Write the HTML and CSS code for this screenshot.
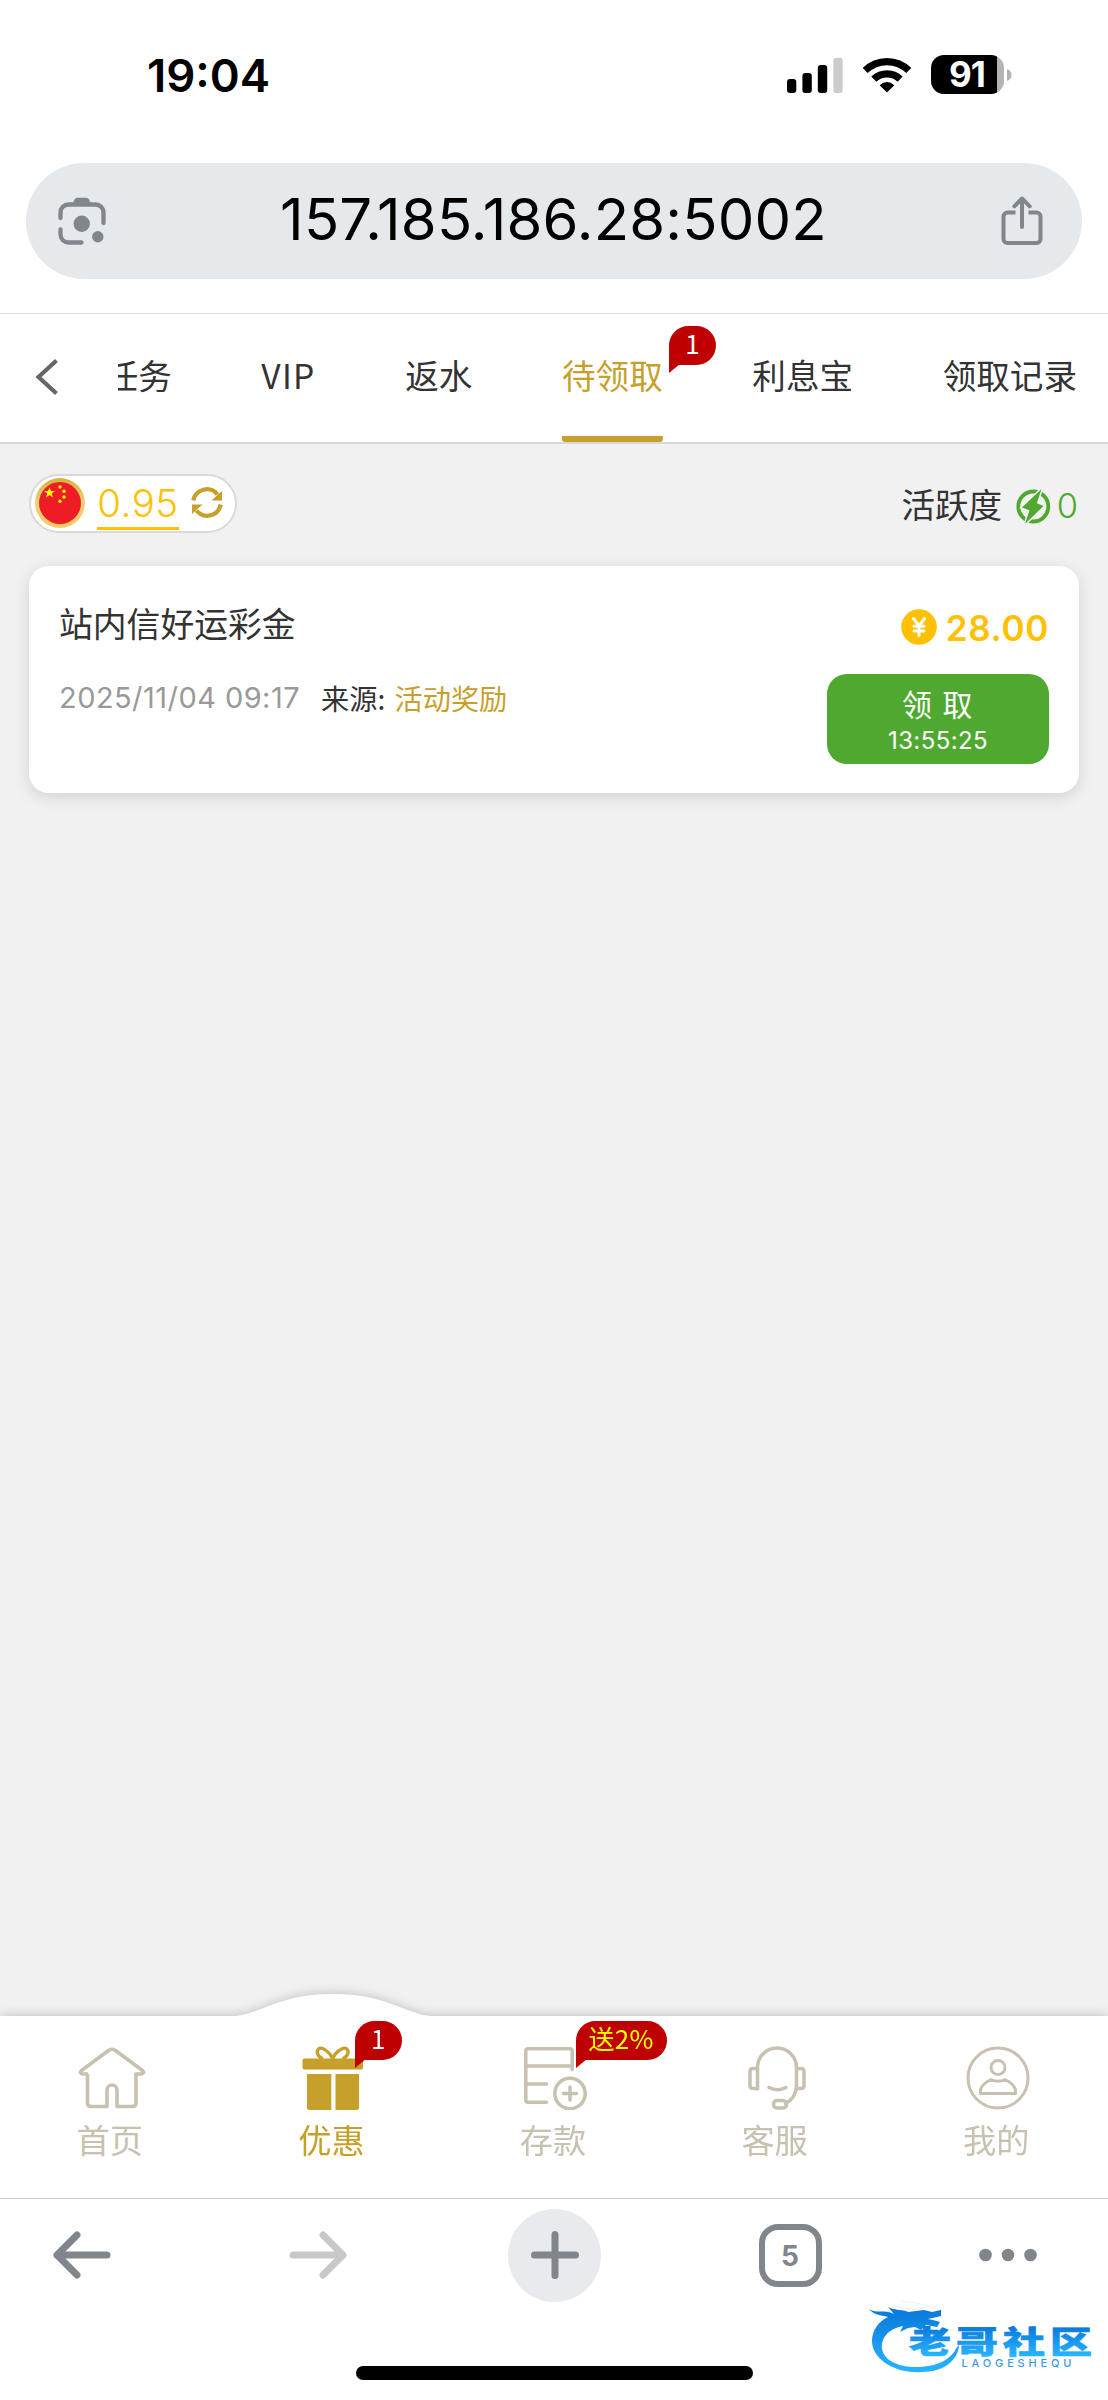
FILE: index.html
```html
<!DOCTYPE html>
<html lang="zh-CN">
<head>
<meta charset="utf-8">
<title>待领取</title>
<link rel="stylesheet" href="styles.css">
</head>
<body>
<div class="screen">
  <header class="status">
    <span class="clock">19:04</span>
    <div class="status-icons">
      <svg width="56" height="36" viewBox="0 0 56 36"><rect x="0" y="22" width="9.3" height="14" rx="3"/><rect x="15.4" y="16" width="9.4" height="20" rx="3"/><rect x="30.8" y="8" width="9.4" height="28" rx="3"/><rect x="46.3" y="0.7" width="9.4" height="35.3" rx="3" fill="#ccc"/></svg>
      <svg class="wifi" width="50" height="36" viewBox="0 0 50 36"><path d="M3.2 13.5a31 31 0 0 1 43.6 0M11.8 22.2a19 19 0 0 1 26.4 0" fill="none" stroke="#000" stroke-width="7.2"/><path d="M17.6 28.2Q25 21.800 32.400 28.200L25 35.600Z"/></svg>
      <div class="battery"><span>91</span></div>
      <svg class="nub" width="5" height="12" viewBox="0 0 5 12"><path d="M0 0Q4.500 1.500 4.500 6T0 12Z" fill="#b3b3b3"/></svg>
    </div>
  </header>

  <div class="address">
    <svg width="48" height="48" viewBox="0 0 48 48" fill="none" stroke="#80868b" stroke-width="4.300" stroke-linecap="round"><path d="M2.500 21v-5.500a8 8 0 0 1 8-8h27a8 8 0 0 1 8 8v10.500M2.500 32.500v5a8 8 0 0 0 8 8h13"/><path d="M14 8 16.500 2.500Q17.500 .8 19 .8H28.500Q30.200 .8 31 2.500L33.500 8Z" fill="#80868b" stroke="none"/><circle cx="23.700" cy="26.700" r="8.200" fill="#80868b" stroke="none"/><circle cx="39.800" cy="39.800" r="5.700" fill="#80868b" stroke="none"/></svg>
    <span class="url">157.185.186.28:5002</span>
    <svg width="42" height="50" viewBox="0 0 42 50" fill="none" stroke="#80868b" stroke-width="4" stroke-linecap="round" stroke-linejoin="round"><path d="M14.500 16.500H6.500a4 4 0 0 0-4 4V43a4 4 0 0 0 4 4h29a4 4 0 0 0 4-4V20.500a4 4 0 0 0-4-4h-8" stroke-linecap="butt"/><path d="M21 31V3M13.300 10.300 21 2.500l7.700 7.800"/></svg>
  </div>

  <nav class="tabs">
    <svg class="back" width="24" height="38" viewBox="0 0 24 38"><path d="M21.500 2.500 3.500 19l18 16.500" fill="none" stroke="#666" stroke-width="4.200"/></svg>
    <div class="tab-track">
      <span class="tab">任务</span>
      <span class="tab vip">VIP</span>
      <span class="tab">返水</span>
      <span class="tab active">待领取</span>
      <span class="tab">利息宝</span>
      <span class="tab">领取记录</span>
    </div>
    <span class="badge tab-badge">1</span>
  </nav>

  <main class="content">
    <div class="summary">
      <div class="balance">
        <svg width="50" height="50" viewBox="0 0 50 50"><defs><linearGradient id="ring" x1="0" y1="0" x2="0" y2="1"><stop offset="0" stop-color="#d9b23d"/><stop offset=".5" stop-color="#ecd079"/><stop offset="1" stop-color="#fdc863"/></linearGradient></defs><circle cx="25" cy="25" r="25" fill="url(#ring)"/><circle cx="25" cy="25" r="21" fill="#ee1c25"/><g fill="#ff0"><path d="M14.500 9.200 15.900 13H20l-3.300 2.500L18 19.500l-3.500-2.400L11 19.500l1.300-4L9 13H13.100Z"/><circle cx="25" cy="9" r="1.700"/><circle cx="29" cy="13.200" r="1.700"/><circle cx="29" cy="19" r="1.700"/><circle cx="25" cy="23.200" r="1.700"/></g></svg>
        <span class="balance-value">0.95</span>
        <svg width="32" height="33" viewBox="0 0 32 33"><g fill="none" stroke="#c7a02b" stroke-width="4.200"><path d="M2.300 14.500A13.700 13.700 0 0 1 26.500 8.500M29.700 18.500A13.700 13.700 0 0 1 5.500 24.500"/></g><path d="M31 5v9.500H20.500ZM1 28v-9.500h10.500Z" fill="#c7a02b"/></svg>
      </div>
      <div class="activity">
        <span>活跃度</span>
        <svg width="35" height="35" viewBox="0 0 35 35"><circle cx="17.300" cy="17.500" r="15" fill="none" stroke="#4fa830" stroke-width="3.800"/><path d="M25.500 0 6 18.500 13.500 21.300 9 35 27.500 17 20.800 14.300Z" fill="#4fa830" stroke="#f1f1f1" stroke-width="3" paint-order="stroke"/></svg>
        <span class="activity-value">0</span>
      </div>
    </div>

    <article class="card">
      <div class="card-info">
        <h2>站内信好运彩金</h2>
        <p><span class="date">2025/11/04 09:17</span><span class="source">来源: </span><span class="reward">活动奖励</span></p>
      </div>
      <div class="card-action">
        <div class="amount">
          <svg width="36" height="36" viewBox="0 0 36 36"><circle cx="18" cy="18" r="17.800" fill="#ffc000"/><path d="M12.500 9.500 18 16.800l5.500-7.300M18 16.500V26.500M13 17.300h10M13 22h10" fill="none" stroke="#fff" stroke-width="3" stroke-linecap="round"/></svg>
          <span>28.00</span>
        </div>
        <button class="claim"><span class="claim-label">领取</span><span class="claim-time">13:55:25</span></button>
      </div>
    </article>
  </main>

  <nav class="bottom">
    <svg class="arch" width="220" height="26" viewBox="0 0 220 26"><path d="M13 23C40 20 56 1 110 1s70 19 97 22v3H13Z" fill="#fff"/></svg>
    <div class="item">
      <svg width="68" height="64" viewBox="0 0 68 64" fill="none" stroke="#c8c1b0" stroke-width="3.600" stroke-linejoin="round"><path d="M10 28H4.500Q1 27.500 3.500 24.500L30.500 4.500Q34 2 37.500 4.500L64.500 24.500Q67 27.500 63.500 28H58V57Q58 60.500 54.500 60.500H39V44a5 5 0 0 0-10 0V60.500H13Q9.500 60.500 9.500 57V28"/></svg>
      <span>首页</span>
    </div>
    <div class="item on">
      <svg width="62" height="64" viewBox="0 0 62 64"><rect x=".5" y="12.500" width="60.500" height="11" rx="2"/><path d="M5 28H29.300V64H7.500Q5 64 5 61.500ZM33.500 28H57V61.500Q57 64 54.500 64H33.500Z"/><path d="M30.500 12.500C27.500 5.500 20 .8 16.800 2.700c-3.300 3-1 8.500 4.200 9.800M30.500 12.500C33.500 5.500 41.300 .8 44.500 2.700c3.300 3 1 8.500-4.200 9.800" fill="none" stroke="#c7a02b" stroke-width="3.300"/></svg>
      <span>优惠</span>
      <b class="badge">1</b>
    </div>
    <div class="item">
      <svg width="64" height="64" viewBox="0 0 64 64" fill="none" stroke="#c8c1b0" stroke-width="3.500" stroke-linecap="round" stroke-linejoin="round"><path d="M49.200 23.500V5Q49.200 2.800 47 2.800H5Q2.800 2.800 2.800 5V54Q2.800 56.200 5 56.200H23.500M3 20H49M3 38H23.500"/><circle cx="47" cy="47.500" r="15.200"/><path d="M40.500 47.500h13M47 41v13"/></svg>
      <span>存款</span>
      <b class="badge gift">送2%</b>
    </div>
    <div class="item">
      <svg width="60" height="64" viewBox="0 0 60 64" fill="none" stroke="#c8c1b0" stroke-width="3.500" stroke-linecap="round"><path d="M10.500 43V21.500a19.500 19.500 0 0 1 39 0V40Q49 52 38.500 57.500" /><path d="M10.500 22.500H6Q3 22.500 3 25.500V39.500Q3 42.500 6 42.500H10.500M49.500 22.500H54Q57 22.500 57 25.500V39.500Q57 42.500 54 42.500H49.500M22 41.500q8.500 4.500 17 0"/><rect x="26.500" y="54.500" width="13" height="7.500" rx="3.500"/></svg>
      <span>客服</span>
    </div>
    <div class="item">
      <svg width="64" height="64" viewBox="0 0 64 64" fill="none" stroke="#c8c1b0" stroke-width="3"><circle cx="32" cy="32" r="30"/><circle cx="32" cy="21.500" r="7"/><path d="M14.500 47.500V43.500Q16 38 25 33.500 32 37 39 33.500 48 38 49.500 43.500V47.500Z" stroke-linejoin="round"/></svg>
      <span>我的</span>
    </div>
  </nav>

  <footer class="toolbar">
    <div class="tools">
      <svg width="58" height="48" viewBox="0 0 58 48" fill="none" stroke="#80868b" stroke-width="7" stroke-linecap="round" stroke-linejoin="round"><path d="M54 24H4M24 4 4 24l20 20"/></svg>
      <svg class="forward" width="58" height="48" viewBox="0 0 58 48" fill="none" stroke="#c8c8c8" stroke-width="7" stroke-linecap="round" stroke-linejoin="round"><path d="M4 24h50M34 4l20 20-20 20"/></svg>
      <span class="new-tab"><svg width="48" height="48" viewBox="0 0 48 48" stroke="#80868b" stroke-width="7" stroke-linecap="round"><path d="M24 3.500v41M3.500 24h41"/></svg></span>
      <span class="tab-count">5</span>
      <svg width="58" height="14" viewBox="0 0 58 14" fill="#80868b"><circle cx="6.500" cy="7" r="6.300"/><circle cx="29" cy="7" r="6.300"/><circle cx="51.500" cy="7" r="6.300"/></svg>
    </div>
    <div class="home-bar"></div>
  </footer>

  <svg class="watermark" width="248" height="90" viewBox="0 0 248 90">
    <defs>
      <linearGradient id="blue" x1="0" y1="15" x2="0" y2="76" gradientUnits="userSpaceOnUse"><stop offset="0" stop-color="#0879dc"/><stop offset="1" stop-color="#28b3ff"/></linearGradient>
      <linearGradient id="word" x1="0" y1="44" x2="0" y2="84" gradientUnits="userSpaceOnUse"><stop offset="0" stop-color="#0879dc"/><stop offset="1" stop-color="#28b3ff"/></linearGradient>
    </defs>
    <path fill="url(#blue)" d="M9 14C17 19 24 14 34 19L28 12C35 16 43 14 48 17L64 15 72 17 81 15 81 21 68 24C73 25 77 26 80 27L77 32 66 30 61 35 55 32 48 33 40 37 43 31C27 34 21 44 22 54 24 66 40 73 60 72 78 71 92 64 97 52L99 50C98 66 83 77 62 77 35 79 12 64 12 46 12 35 19 26 28 22 20 20 14 20 9 14Z"/>
    <path d="M32 10Q53 18 70 11M42 6Q66 9 76 14" fill="none" stroke="#e4f2fd" stroke-width="1"/>
    <g transform="scale(1 .72)"><text class="mark" x="49" y="80" textLength="183" fill="url(#word)" stroke="url(#word)" stroke-width="1">老哥社区</text></g>
    <text class="latin" x="101.500" y="72" textLength="110" fill="#3a9be8">LAOGESHEQU</text>
  </svg>
</div>
</body>
</html>
```
FILE: styles.css
```css
* { box-sizing: border-box; }
body { margin: 0; background: #fff; font-family: "Noto Sans CJK SC", sans-serif; color: #333; }
svg { display: block; flex: none; }
.screen { position: relative; width: 1108px; height: 2400px; display: flex; flex-direction: column; overflow: hidden; }

.status { height: 163px; padding: 55px 96px 0 147px; display: flex; justify-content: space-between; align-items: flex-start; color: #000; font-family: Inter, sans-serif; }
.clock { font-size: 45.5px; font-weight: 600; line-height: 41px; }
.status-icons { display: flex; align-items: center; height: 39px; }
.wifi { margin: 0 19px; }
.battery { width: 73px; height: 39px; border-radius: 13px; background: linear-gradient(to right, #000 66px, #b3b3b3 66px); padding-right: 1px; color: #fff; font-size: 35px; font-weight: 700; line-height: 39px; text-align: center; letter-spacing: -1px; }
.nub { margin-left: 3px; }

.address { height: 116px; margin: 0 26px; padding: 0 39px 0 32px; border-radius: 58px; background: #e5e9ec; display: flex; align-items: center; justify-content: space-between; color: #000; font-family: Inter, sans-serif; }
.url { font-size: 58px; line-height: 70px; letter-spacing: 0.2px; padding-bottom: 5px; }

.tabs { position: relative; height: 131px; margin-top: 34px; border-top: 1px solid #dcdcdc; border-bottom: 2px solid #d8d8d8; display: flex; padding: 0 31px 0 35px; }
.back { margin-top: 44px; }
.tab-track { flex: 1; margin-left: 59px; display: flex; justify-content: flex-end; gap: 89.6px; overflow: hidden; }
.tab { flex: none; font-size: 33.6px; line-height: 122px; height: 128px; white-space: nowrap; }
.vip { letter-spacing: 1.3px; }
.tab.active { color: #c7a02b; background: linear-gradient(#c7a02b, #c7a02b) bottom / 100% 6px no-repeat; border-radius: 3px; }
.badge { position: absolute; height: 39px; min-width: 47px; border-radius: 20px 20px 20px 0; background: #bf0000; color: #fff; font-size: 26px; font-weight: 400; line-height: 33px; text-align: center; }
.badge::after { content: ""; position: absolute; left: 0; top: 38px; border-top: 9px solid #bf0000; border-right: 11px solid transparent; }
.tab-badge { left: 669px; top: 12px; }

.content { height: 1572px; background: #f1f1f1; padding: 30px 29px 0; }
.summary { height: 59px; display: flex; justify-content: space-between; padding-right: 1px; }
.balance { width: 208px; border: 2px solid #d9d9d9; border-radius: 30px; background: #fff; padding: 2px 0 0 4px; display: flex; align-items: flex-start; }
.balance-value { width: 82px; height: 52px; margin: 0 12px; border-bottom: 3px solid #ffc000; color: #ffc000; font: 300 38.5px/51px Inter, sans-serif; letter-spacing: 0.5px; text-align: center; }
.balance svg:last-child { margin-top: 8px; }
.activity { display: flex; align-items: center; font-size: 33.6px; line-height: 54px; }
.activity svg { margin: 6px 6px 0 13.500px; }
.activity-value { color: #4fa830; font: 300 34.5px/54px Inter, sans-serif; padding-top: 4px; }

.card { height: 227px; margin-top: 33px; padding: 38px 30px 0; border-radius: 20px; background: #fff; box-shadow: 0 4px 16px rgba(0, 0, 0, .13); display: flex; justify-content: space-between; }
.card h2 { margin: 0; font-size: 33.8px; font-weight: 400; line-height: 38px; }
.card p { margin: 36px 0 0; display: flex; align-items: center; font-size: 28.2px; line-height: 38px; white-space: pre; }
.date { width: 262px; color: #999; font: 400 29px/38px Inter, sans-serif; letter-spacing: 0.45px; padding-top: 1px; }
.source { margin-right: 3px; }
.reward { color: #c7a02b; }
.card-action { display: flex; flex-direction: column; align-items: flex-end; }
.amount { display: flex; align-items: center; gap: 9px; margin-top: 3px; color: #ffc000; font: 600 35px/36px Inter, sans-serif; letter-spacing: 0.7px; }
.amount span { padding-top: 3px; }
.claim { width: 222px; height: 90px; margin: 28px 0 0; padding: 10px 0 0; border: 0; border-radius: 20px; background: #4fa830; color: #fff; display: flex; flex-direction: column; align-items: center; font-family: "Noto Sans CJK SC", sans-serif; }
.claim-label { font-size: 30px; line-height: 38px; letter-spacing: 10.500px; padding-left: 9px; }
.claim-time { font: 400 24px/30px Inter, sans-serif; letter-spacing: 0.4px; margin-top: 4px; }

.bottom { position: relative; height: 182px; background: #fff; display: grid; grid-template-columns: repeat(5, 1fr); filter: drop-shadow(0 0 6px rgba(0, 0, 0, .22)); }
.arch { position: absolute; left: 223px; top: -23px; }
.item { position: relative; display: flex; flex-direction: column; align-items: center; padding-top: 30px; color: #c8c1b0; font-size: 33.2px; line-height: 40px; }
.item > svg { margin-left: 2px; }
.item > span { margin-top: 9px; margin-right: 2px; }
.on { color: #c7a02b; fill: #c7a02b; }
.item .badge { left: 133px; top: 5px; }
.item .gift { width: 91px; color: #ff0; letter-spacing: 0.4px; padding-right: 1px; }

.toolbar { position: relative; flex: 1; border-top: 1px solid #ccc; background: #fff; }
.tools { height: 112px; padding-left: 53px; display: flex; align-items: center; }
.forward { margin: 0 161px 0 178px; }
.new-tab { width: 93px; height: 93px; border-radius: 50%; background: #e8eaed; display: flex; align-items: center; justify-content: center; }
.tab-count { width: 63px; height: 63px; margin: 0 157px 0 157.500px; border: 6px solid #80868b; border-radius: 19px; color: #80868b; font: 700 28px/53px Inter, sans-serif; text-align: center; }
.home-bar { width: 397px; height: 14px; margin: 55px auto 0; border-radius: 7px; background: #000; }

.watermark { position: absolute; left: 860px; top: 2295px; }
.mark { font: 900 42px "Noto Sans CJK SC", sans-serif; }
.latin { font: 500 11px Inter, sans-serif; }
```
